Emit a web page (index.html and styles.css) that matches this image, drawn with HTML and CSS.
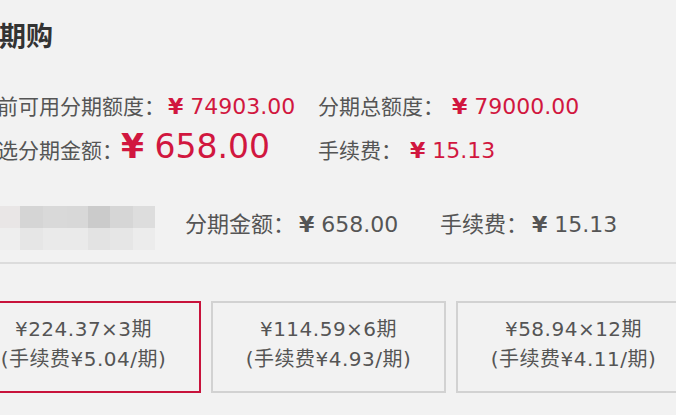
FILE: index.html
```html
<!DOCTYPE html>
<html lang="zh-CN">
<head>
<meta charset="utf-8">
<title>分期购</title>
<link rel="stylesheet" href="styles.css">
</head>
<body>
<div class="page">
	<h2 class="title">分期购</h2>

	<div class="quota">
		<div class="row">
			<div class="col left">当前可用分期额度：<span class="money"><b>¥</b> 74903.00</span></div>
			<div class="col right">分期总额度：<span class="money"><b>¥</b> 79000.00</span></div>
		</div>
		<div class="row second">
			<div class="col left">已选分期金额：<span class="money big"><b>¥</b> 658.00</span></div>
			<div class="col right">手续费：<span class="money"><b>¥</b> 15.13</span></div>
		</div>
	</div>

	<div class="product">
		<!-- pixelated product picture -->
		<div class="mosaic">
			<i></i><i></i><i></i><i></i><i></i><i></i><i></i>
			<i></i><i></i><i></i><i></i><i></i><i></i><i></i>
		</div>
		<div class="sum first">分期金额：<span class="num"><b>¥</b> 658.00</span></div>
		<div class="sum">手续费：<span class="num"><b>¥</b> 15.13</span></div>
	</div>

	<ul class="plans">
		<li class="active"><span>¥224.37×3期</span><span>(手续费¥5.04/期)</span></li>
		<li><span>¥114.59×6期</span><span>(手续费¥4.93/期)</span></li>
		<li><span>¥58.94×12期</span><span>(手续费¥4.11/期)</span></li>
	</ul>
</div>
</body>
</html>
```

FILE: styles.css
```css
html, body {margin: 0; padding: 0;}
body {
    background: #f2f2f2;
    font-family: "Noto Sans CJK SC", "DejaVu Sans", sans-serif;
    color: #555;
    overflow: hidden;
}
.page {
    width: 760px;
    margin-left: -36px;
}
.title {
    margin: 20px 0 0 0;
    padding-left: 8px;
    font-size: 27px;
    line-height: 30px;
    font-weight: bold;
    color: #333;
}

/* quota block */
.quota {
    padding-left: 12px;
    margin-top: 40px;
}
.row {
    display: flex;
    align-items: baseline;
    font-size: 21px;
    line-height: 30px;
}
.row.second {
    line-height: 40px;
    margin-top: 5px;
}
.col.left {
    width: 342px;
}
.money {
    color: #d1173f;
    font-family: "DejaVu Sans", sans-serif;
    font-size: 22px;
    margin-left: 3px;
}
.col.right .money {
    margin-left: 8px;
}
.money.big {
    font-size: 33px;
    margin-left: -2px;
}

/* product line */
.product {
    display: flex;
    align-items: center;
    margin-top: 35px;
    padding: 0 0 12px 36px;
    border-bottom: 2px solid #dcdcdc;
    font-size: 22px;
}
.mosaic {
    display: grid;
    grid-template-columns: 20px 23px 24px 21px 22px 23px 22px;
    grid-template-rows: 22px 22px;
    width: 155px;
}
.mosaic i:nth-child(1) {background: #e9e6e6;}
.mosaic i:nth-child(2) {background: #d5d5d5;}
.mosaic i:nth-child(3) {background: #d9d9d9;}
.mosaic i:nth-child(4) {background: #d8d8d8;}
.mosaic i:nth-child(5) {background: #cbcbcb;}
.mosaic i:nth-child(6) {background: #d6d6d6;}
.mosaic i:nth-child(7) {background: #dddddd;}
.mosaic i:nth-child(8) {background: #eeeeee;}
.mosaic i:nth-child(9) {background: #e6e6e6;}
.mosaic i:nth-child(10) {background: #eaeaea;}
.mosaic i:nth-child(11) {background: #eaeaea;}
.mosaic i:nth-child(12) {background: #e3e3e3;}
.mosaic i:nth-child(13) {background: #e6e6e6;}
.mosaic i:nth-child(14) {background: #ececec;}
.sum {
    color: #555;
    line-height: 24px;
    margin-bottom: 10px;
}
.sum.first {
    margin-left: 30px;
    width: 255px;
}
.num {
    font-family: "DejaVu Sans", sans-serif;
    font-size: 22px;
    margin-left: 4px;
}

/* plan choices */
.plans {
    display: flex;
    gap: 10px;
    list-style: none;
    margin: 37px 0 0 0;
    padding: 0 0 0 2px;
}
.plans li {
    width: 231px;
    border: 2px solid #d2d2d2;
    padding: 11px 0 17px;
    display: flex;
    flex-direction: column;
    align-items: center;
    font-family: "DejaVu Sans", "Noto Sans CJK SC", sans-serif;
    font-size: 20px;
    line-height: 30px;
    letter-spacing: 0.5px;
    color: #555;
}
.plans li.active {
    border-color: #c8133c;
}
```
